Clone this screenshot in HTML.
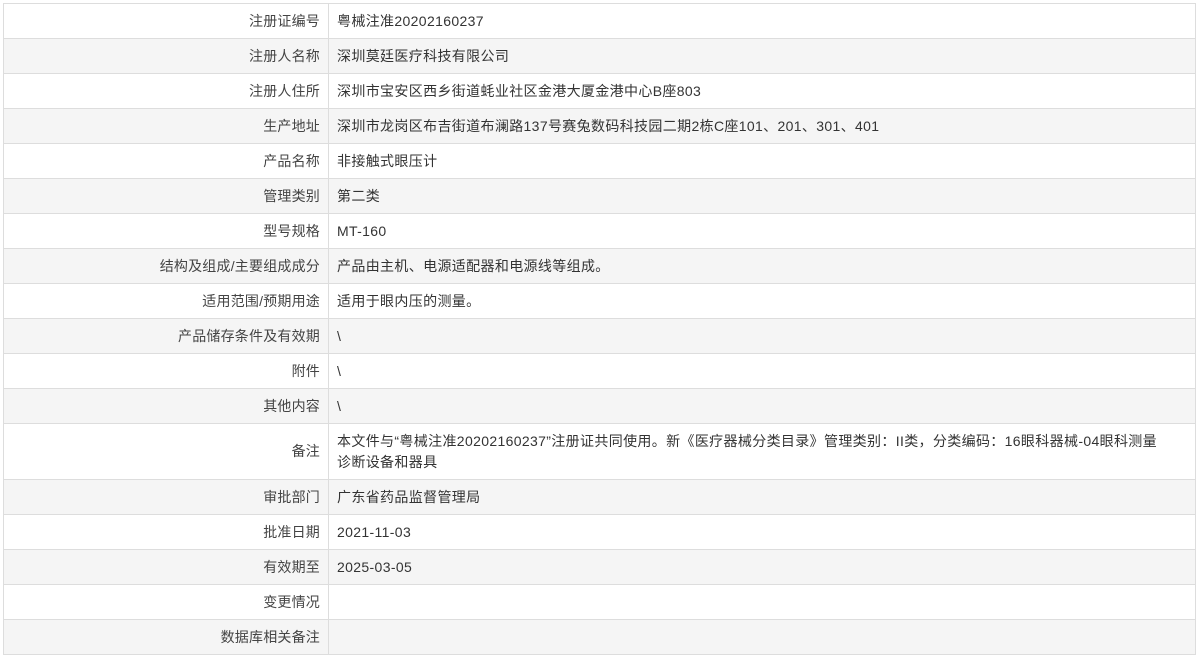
<!DOCTYPE html>
<html><head><meta charset="utf-8"><style>
body{margin:0;background:#fff;font-family:"Liberation Sans","Noto Sans CJK SC",sans-serif;font-size:14px;color:#333}
table{position:absolute;left:3px;top:3px;width:1193px;border-collapse:collapse;border:1px solid #ddd}
td{border:1px solid #ddd;height:35px;padding:0 8px;line-height:21px;box-sizing:border-box;letter-spacing:0.35px}
td.l{width:325px;text-align:right;color:#444;letter-spacing:0.2px}
tr:nth-child(even) td{background:#f5f5f5}
tr.n td{height:56px}
</style></head><body>
<table>
<tr><td class="l">注册证编号</td><td>粤械注准20202160237</td></tr>
<tr><td class="l">注册人名称</td><td>深圳莫廷医疗科技有限公司</td></tr>
<tr><td class="l">注册人住所</td><td>深圳市宝安区西乡街道蚝业社区金港大厦金港中心B座803</td></tr>
<tr><td class="l">生产地址</td><td>深圳市龙岗区布吉街道布澜路137号赛兔数码科技园二期2栋C座101、201、301、401</td></tr>
<tr><td class="l">产品名称</td><td>非接触式眼压计</td></tr>
<tr><td class="l">管理类别</td><td>第二类</td></tr>
<tr><td class="l">型号规格</td><td>MT-160</td></tr>
<tr><td class="l">结构及组成/主要组成成分</td><td>产品由主机、电源适配器和电源线等组成。</td></tr>
<tr><td class="l">适用范围/预期用途</td><td>适用于眼内压的测量。</td></tr>
<tr><td class="l">产品储存条件及有效期</td><td>\</td></tr>
<tr><td class="l">附件</td><td>\</td></tr>
<tr><td class="l">其他内容</td><td>\</td></tr>
<tr class="n"><td class="l">备注</td><td>本文件与“粤械注准20202160237”注册证共同使用。新《医疗器械分类目录》管理类别：II类，分类编码：16眼科器械-04眼科测量<br>诊断设备和器具</td></tr>
<tr><td class="l">审批部门</td><td>广东省药品监督管理局</td></tr>
<tr><td class="l">批准日期</td><td>2021-11-03</td></tr>
<tr><td class="l">有效期至</td><td>2025-03-05</td></tr>
<tr><td class="l">变更情况</td><td></td></tr>
<tr><td class="l">数据库相关备注</td><td></td></tr>
</table>
</body></html>
